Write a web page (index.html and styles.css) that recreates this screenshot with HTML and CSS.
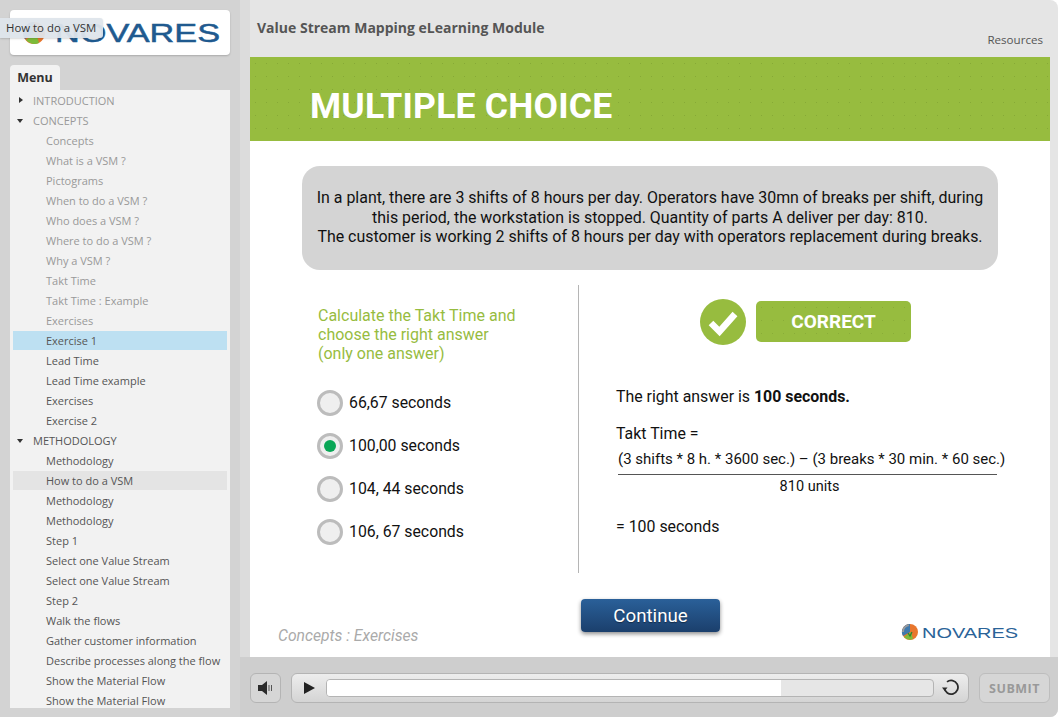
FILE: index.html
```html
<!DOCTYPE html>
<html lang="en">
<head>
    <meta charset="UTF-8">
    <meta name="viewport" content="width=device-width, initial-scale=1.0">
    <title>Value Stream Mapping eLearning Module</title>
    <link rel="stylesheet" href="styles.css">
</head>
<body>

    <div class="app">
        <aside class="sidebar">
            <div class="logo-box">
                <svg class="logo-big" width="200" height="30" viewBox="0 0 200 30">
                    <circle cx="13" cy="15" r="11" fill="#e8762d"/>
                    <path d="M13 4a11 11 0 0 0-9 17l9-6z" fill="#3f79ae"/>
                    <path d="M5 22a11 11 0 0 0 13 3l-3-11z" fill="#7dbb3a"/>
                    <text x="34" y="24" font-family="Liberation Sans" font-size="26" fill="#1f5a8f" stroke="#1f5a8f" stroke-width="0.5" textLength="165" lengthAdjust="spacingAndGlyphs">NOVARES</text>
                </svg>
            </div>
            <div class="tooltip">How to do a VSM</div>
            <div class="menu-tab">Menu</div>
            <ul class="menu">
                <li class="section visited"><span class="arrow closed"></span>INTRODUCTION</li>
                <li class="section visited"><span class="arrow"></span>CONCEPTS</li>
                <li class="item visited">Concepts</li>
                <li class="item visited">What is a VSM ?</li>
                <li class="item visited">Pictograms</li>
                <li class="item visited">When to do a VSM ?</li>
                <li class="item visited">Who does a VSM ?</li>
                <li class="item visited">Where to do a VSM ?</li>
                <li class="item visited">Why a VSM ?</li>
                <li class="item visited">Takt Time</li>
                <li class="item visited">Takt Time : Example</li>
                <li class="item visited">Exercises</li>
                <li class="item current">Exercise 1</li>
                <li class="item">Lead Time</li>
                <li class="item">Lead Time example</li>
                <li class="item">Exercises</li>
                <li class="item">Exercise 2</li>
                <li class="section"><span class="arrow"></span>METHODOLOGY</li>
                <li class="item">Methodology</li>
                <li class="item hovered">How to do a VSM</li>
                <li class="item">Methodology</li>
                <li class="item">Methodology</li>
                <li class="item">Step 1</li>
                <li class="item">Select one Value Stream</li>
                <li class="item">Select one Value Stream</li>
                <li class="item">Step 2</li>
                <li class="item">Walk the flows</li>
                <li class="item">Gather customer information</li>
                <li class="item">Describe processes along the flow</li>
                <li class="item">Show the Material Flow</li>
                <li class="item">Show the Material Flow</li>
            </ul>
        </aside>

        <main class="main">
            <header class="topbar">
                <h1>Value Stream Mapping eLearning Module</h1>
                <a class="resources">Resources</a>
            </header>

            <section class="slide">
                <div class="banner"><h2>MULTIPLE CHOICE</h2></div>
                <div class="slide-body">
                    <div class="question">
                        In a plant, there are 3 shifts of 8 hours per day. Operators have 30mn of breaks per shift, during this period, the workstation is stopped. Quantity of parts A deliver per day: 810.<br>
                        The customer is working 2 shifts of 8 hours per day with operators replacement during breaks.
                    </div>

                    <div class="columns">
                        <div class="col-left">
                            <p class="prompt">Calculate the Takt Time and<br>choose the right answer<br>(only one answer)</p>
                            <div class="option"><span class="radio"></span>66,67 seconds</div>
                            <div class="option"><span class="radio checked"></span>100,00 seconds</div>
                            <div class="option"><span class="radio"></span>104, 44 seconds</div>
                            <div class="option"><span class="radio"></span>106, 67 seconds</div>
                        </div>
                        <div class="col-right">
                            <div class="result">
                                <svg width="46" height="46" viewBox="0 0 46 46">
                                    <circle cx="23" cy="23" r="23" fill="#97bc3f"/>
                                    <path d="M11 24l8.500 8.500L35 15" fill="none" stroke="#fff" stroke-width="6.500"/>
                                </svg>
                                <div class="correct">CORRECT</div>
                            </div>
                            <p class="answer">The right answer is <b>100 seconds.</b></p>
                            <p class="formula-title">Takt Time =</p>
                            <p class="formula-top">(3 shifts * 8 h. * 3600 sec.) – (3 breaks * 30 min. * 60 sec.)</p>
                            <p class="formula-bottom">810 units</p>
                            <p class="formula-result">= 100 seconds</p>
                        </div>
                    </div>

                    <div class="slide-foot">
                        <span class="crumb">Concepts : Exercises</span>
                        <button class="continue">Continue</button>
                        <svg class="logo-small" width="118" height="18" viewBox="0 0 118 18">
                            <circle cx="9" cy="9" r="8" fill="#e8762d"/>
                            <path d="M9 1a8 8 0 0 0-7 12l7-4z" fill="#3f79ae"/>
                            <path d="M7.500 1.200A8 8 0 0 0 1 9l2 0a6 6 0 0 1 5-6z" fill="#9a9a9a"/>
                            <path d="M3 14a8 8 0 0 0 9 2l-2-7z" fill="#7dbb3a"/>
                            <path d="M7 10l2 3 2-4" fill="none" stroke="#2f7d32" stroke-width="1.200"/>
                            <text x="21" y="14.500" font-family="Liberation Sans" font-size="15.500" fill="#2a6398" textLength="96" lengthAdjust="spacingAndGlyphs">NOVARES</text>
                        </svg>
                    </div>
                </div>
            </section>

            <footer class="controls">
                <button class="ctrl-btn volume">
                    <svg width="16" height="14" viewBox="0 0 16 14">
                        <path d="M0 4h4l5-4v14l-5-4H0z" fill="#2b2b2b"/>
                        <path d="M11 4v6M13.500 4v6" stroke="#555" stroke-width="1"/>
                    </svg>
                </button>
                <div class="player">
                    <svg class="play" width="11" height="12" viewBox="0 0 11 12"><path d="M0 0l11 6L0 12z" fill="#222"/></svg>
                    <div class="track"><div class="track-fill" style="width:74.900%"></div></div>
                    <svg class="reload" width="18" height="18" viewBox="0 0 18 18">
                        <path d="M5 2.900A6.800 6.800 0 1 1 2.400 9" fill="none" stroke="#2b2b2b" stroke-width="1.800"/>
                        <path d="M0 8.500h5.500L2.700 12z" fill="#2b2b2b"/>
                    </svg>
                </div>
                <button class="submit">SUBMIT</button>
            </footer>
        </main>
    </div>

</body>
</html>
```

FILE: styles.css
```css
html, body {
    margin: 0;
    height: 100%;
    background: #fff;
    overflow: hidden;
}
h1, h2, p, ul {
    margin: 0;
    padding: 0;
}
.app {
    display: flex;
    width: 1058px;
    height: 717px;
    position: relative;
    border-radius: 0 8px 8px 0;
    overflow: hidden;
    background: #e5e5e5;
    font-family: Roboto, sans-serif;
    color: #111;
}

/* left side */
.sidebar {
    width: 220px;
    padding: 10px 10px 9px;
    flex-shrink: 0;
    display: flex;
    flex-direction: column;
    background: #d3d3d3;
    font-family: "Open Sans", sans-serif;
}
.logo-box {
    height: 45px;
    background: #fff;
    border-radius: 4px;
    box-shadow: 0 1px 2px rgba(0, 0, 0, 0.2);
    display: flex;
    align-items: center;
    padding-left: 11px;
}
.tooltip {
    position: absolute;
    left: 0;
    top: 18px;
    width: 103px;
    height: 20px;
    line-height: 20px;
    box-sizing: border-box;
    padding-left: 6px;
    font-size: 11.400px;
    color: #333;
    background: rgba(222, 229, 235, 0.95);
    border-radius: 0 3px 3px 0;
    box-shadow: 0 1px 2px rgba(0, 0, 0, 0.15);
}
.menu-tab {
    width: 50px;
    height: 25px;
    line-height: 26px;
    margin-top: 10px;
    text-align: center;
    font-size: 12.500px;
    font-weight: 700;
    color: #333;
    background: #f2f2f2;
    border-radius: 4px 4px 0 0;
}
.menu {
    flex: 1;
    min-height: 0;
    overflow: hidden;
    list-style: none;
    background: #f2f2f2;
    padding: 1px 3px 0;
}
.menu li {
    height: 20px;
    line-height: 20px;
    font-size: 11px;
    color: #555;
    white-space: nowrap;
    position: relative;
}
.menu .section {
    padding-left: 20px;
}
.menu .item {
    padding-left: 33px;
}
.menu .visited {
    color: #999;
}
.menu .current {
    height: 19px;
    margin-bottom: 1px;
    background: #bde0f2;
}
.menu .hovered {
    height: 19px;
    margin-bottom: 1px;
    background: #e4e4e4;
}
.arrow {
    position: absolute;
    left: 4px;
    top: 8px;
    border-left: 3.500px solid transparent;
    border-right: 3.500px solid transparent;
    border-top: 4px solid #333;
}
.arrow.closed {
    left: 6px;
    top: 6px;
    border-top: 3.500px solid transparent;
    border-bottom: 3.500px solid transparent;
    border-left: 4px solid #333;
    border-right: 0;
}

/* right side */
.main {
    flex: 1;
    display: flex;
    flex-direction: column;
    margin-left: 10px;
    box-shadow: -10px 0 0 #dcdcdc;
}
.topbar {
    height: 57px;
    position: relative;
    font-family: "Open Sans", sans-serif;
}
.topbar h1 {
    padding: 19px 0 0 7px;
    font-size: 14px;
    line-height: 18px;
    font-weight: 700;
    color: #555;
}
.resources {
    position: absolute;
    right: 15px;
    top: 32px;
    font-size: 11.600px;
    color: #555;
}
.slide {
    width: 800px;
    height: 600px;
    background: #fff;
    display: flex;
    flex-direction: column;
}
.banner {
    height: 84px;
    box-sizing: border-box;
    padding: 14px 0 0 60px;
    background-color: #97bc3f;
    background-image: radial-gradient(rgba(70, 100, 20, 0.22) 0.5px, transparent 0.8px);
    background-size: 11px 13px;
    display: flex;
    align-items: center;
}
.banner h2 {
    font-size: 35.500px;
    font-weight: 700;
    letter-spacing: 0.2px;
    color: #fff;
}
.slide-body {
    flex: 1;
    display: flex;
    flex-direction: column;
    padding: 25px 0 0 28px;
}
.question {
    width: 696px;
    height: 104px;
    box-sizing: border-box;
    margin-left: 24px;
    padding: 22px 10px 0;
    background: #d4d4d4;
    border-radius: 18px;
    text-align: center;
    font-size: 15.950px;
    line-height: 19.500px;
}
.columns {
    display: flex;
    margin: 15px 0 0 0;
    height: 288px;
}
.col-left {
    width: 301px;
    box-sizing: border-box;
    padding: 21px 0 0 40px;
    border-right: 1px solid #b5b5b5;
}
.prompt {
    font-size: 16px;
    line-height: 19px;
    color: #97bc3f;
    margin-bottom: 18px;
}
.option {
    display: flex;
    align-items: center;
    height: 43px;
    margin-left: -1px;
    font-size: 15.800px;
}
.radio {
    width: 20px;
    height: 20px;
    margin-right: 6px;
    border: 3px solid #bcbcbc;
    border-radius: 50%;
    background: #efefef;
    display: flex;
    align-items: center;
    justify-content: center;
}
.radio.checked::after {
    content: "";
    width: 12px;
    height: 12px;
    border-radius: 50%;
    background: #0aa757;
}
.col-right {
    flex: 1;
    padding: 14px 0 0 37px;
    font-size: 15.900px;
}
.result {
    display: flex;
    align-items: center;
    gap: 10px;
    margin-left: 84px;
}
.correct {
    width: 155px;
    height: 41px;
    line-height: 41px;
    margin-top: -1px;
    text-align: center;
    font-size: 19px;
    font-weight: 700;
    color: #fff;
    background-color: #97bc3f;
    background-image: radial-gradient(rgba(70, 100, 20, 0.18) 0.5px, transparent 0.8px);
    background-size: 11px 13px;
    border-radius: 5px;
}
.answer {
    margin-top: 42px;
    line-height: 20px;
}
.formula-title {
    margin-top: 17px;
    line-height: 20px;
}
.formula-top {
    width: 379px;
    margin: 3px 0 0 2px;
    padding-bottom: 3px;
    line-height: 24px;
    font-size: 15px;
    text-align: center;
    white-space: nowrap;
    border-bottom: 1px solid #555;
}
.formula-bottom {
    width: 375px;
    margin-left: 2px;
    padding-left: 4px;
    line-height: 24px;
    font-size: 14.500px;
    text-align: center;
}
.formula-result {
    margin-top: 18px;
    line-height: 20px;
}
.slide-foot {
    flex: 1;
    position: relative;
}
.crumb {
    position: absolute;
    left: 0;
    top: 53px;
    font-size: 15.700px;
    font-style: italic;
    color: #aaa;
}
.continue {
    position: absolute;
    left: 303px;
    top: 26px;
    width: 139px;
    height: 33px;
    border: 0;
    border-radius: 4px;
    background: linear-gradient(#2a6099, #1b3f6c);
    box-shadow: 0 2px 4px rgba(0, 0, 0, 0.45);
    color: #fff;
    text-shadow: 0 1px 1px rgba(0, 0, 0, 0.4);
    font-family: Roboto, sans-serif;
    font-size: 18.700px;
}
.logo-small {
    position: absolute;
    left: 623px;
    top: 50px;
}

/* bottom bar */
.controls {
    flex: 1;
    display: flex;
    align-items: flex-start;
    gap: 10px;
    width: 800px;
    padding-top: 16px;
    background: #cecece;
    box-shadow: -10px 0 0 #cecece, 8px 0 0 #cecece;
}
.ctrl-btn {
    width: 31px;
    height: 30px;
    padding: 0;
    border: 1px solid #b4b4b4;
    border-radius: 6px;
    background: #d6d6d6;
    display: flex;
    align-items: center;
    justify-content: center;
}
.player {
    flex: 1;
    height: 30px;
    box-sizing: border-box;
    display: flex;
    align-items: center;
    border: 1px solid #b4b4b4;
    border-radius: 6px;
    background: linear-gradient(#ededed, #d4d4d4);
}
.play {
    margin: 0 11px 0 12px;
}
.track {
    flex: 1;
    height: 18px;
    box-sizing: border-box;
    border: 1px solid #b4b4b4;
    border-radius: 4px;
    background: #e6e6e6;
    overflow: hidden;
}
.track-fill {
    height: 100%;
    background: #fff;
}
.reload {
    margin: 0 8px;
}
.submit {
    width: 71px;
    height: 30px;
    padding: 0;
    border: 1px solid #bdbdbd;
    border-radius: 6px;
    background: #d6d6d6;
    font-family: "Open Sans", sans-serif;
    font-size: 12.500px;
    font-weight: 700;
    letter-spacing: 0.5px;
    color: #999;
}
```
